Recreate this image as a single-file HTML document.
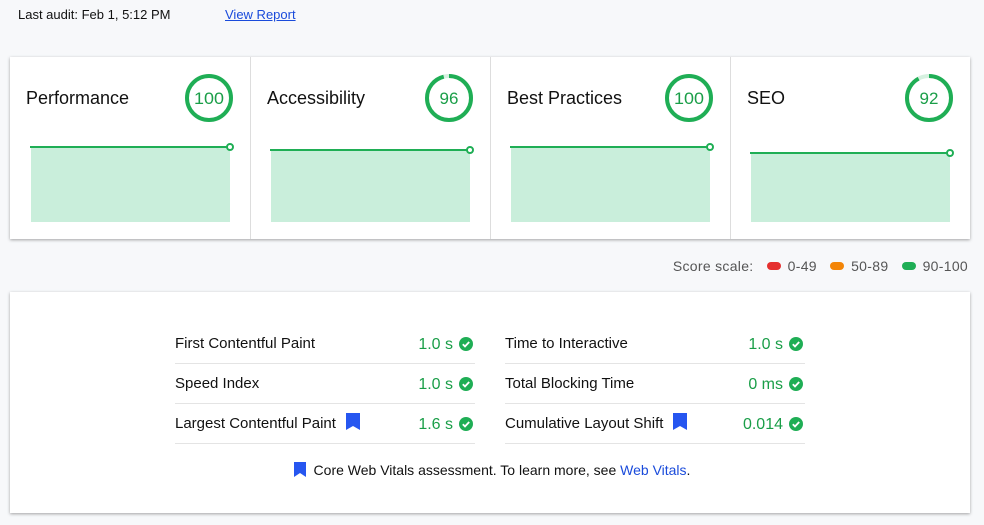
<!DOCTYPE html>
<html><head><style>
body{margin:0;background:#f7f8fa;font-family:"Liberation Sans",Arial,sans-serif;width:984px;height:525px;overflow:hidden;position:relative;color:#111}
.top{position:absolute;top:7px;left:18px;font-size:13px}
.top a{position:absolute;left:207px;top:0;color:#1a4bdb;white-space:nowrap}
.panel{position:absolute;left:10px;width:960px;background:#fff;box-shadow:0 1px 3px rgba(0,0,0,.35)}
.col{position:absolute;top:0;width:240px;height:182px;border-left:1px solid #ddd;box-sizing:border-box}
.col:first-child{border-left:none}
.col h2{position:absolute;left:16px;top:31px;margin:0;font-size:18px;font-weight:normal}
.col svg.g{position:absolute;left:174px;top:17px}
.col svg.c{position:absolute;left:0;top:0}
.scale{position:absolute;top:258px;right:16px;font-size:14px;color:#555;white-space:nowrap;letter-spacing:0.3px}
.scale i{display:inline-block;width:14px;height:8px;border-radius:4px;margin:0 7px 0 9px;vertical-align:1px}
.m{position:absolute;width:300px;height:40px;font-size:15px;border-bottom:1px solid #e4e4e4;box-sizing:border-box;line-height:40px}
.m .v{position:absolute;right:22px;top:1px;color:#1a9e48;font-size:16px}
.m .ck{position:absolute;right:2px;top:13px}
.bm{display:inline-block;vertical-align:-2px;margin-left:10px}
.foot{position:absolute;top:462px;left:0;width:984px;text-align:center;font-size:14px}
.foot a{color:#1a4bdb;text-decoration:none}
</style></head><body>
<div class="top">Last audit: Feb 1, 5:12 PM<a href="#">View Report</a></div>
<div class="panel" style="top:57px;height:182px">
 <div class="col" style="left:0">
  <h2>Performance</h2>
  <svg class="g" width="50" height="50"><circle cx="25" cy="24" r="22" fill="none" stroke="#1fae55" stroke-width="4"/><text x="25" y="30" font-size="17" fill="#1a9e48" text-anchor="middle" font-family="Liberation Sans" textLength="30" lengthAdjust="spacingAndGlyphs">100</text></svg>
  <svg class="c" width="240" height="182"><rect x="21" y="90" width="199" height="75" fill="#c9eedb"/><line x1="20" y1="90" x2="217" y2="90" stroke="#1fae55" stroke-width="2"/><circle cx="220" cy="90" r="3" fill="#fff" stroke="#1fae55" stroke-width="2"/></svg>
 </div>
 <div class="col" style="left:240px">
  <h2>Accessibility</h2>
  <svg class="g" width="50" height="50" style="left:173px"><circle cx="25" cy="24" r="22" fill="none" stroke="#d6f1e0" stroke-width="4"/><circle cx="25" cy="24" r="22" fill="none" stroke="#1fae55" stroke-width="4" stroke-dasharray="132.7 200" transform="rotate(-90 25 24)"/><text x="25" y="30" font-size="17" fill="#1a9e48" text-anchor="middle" font-family="Liberation Sans">96</text></svg>
  <svg class="c" width="240" height="182" style="left:-1px"><rect x="21" y="93" width="199" height="72" fill="#c9eedb"/><line x1="20" y1="93" x2="217" y2="93" stroke="#1fae55" stroke-width="2"/><circle cx="220" cy="93" r="3" fill="#fff" stroke="#1fae55" stroke-width="2"/></svg>
 </div>
 <div class="col" style="left:480px">
  <h2>Best Practices</h2>
  <svg class="g" width="50" height="50" style="left:173px"><circle cx="25" cy="24" r="22" fill="none" stroke="#1fae55" stroke-width="4"/><text x="25" y="30" font-size="17" fill="#1a9e48" text-anchor="middle" font-family="Liberation Sans" textLength="30" lengthAdjust="spacingAndGlyphs">100</text></svg>
  <svg class="c" width="240" height="182" style="left:-1px"><rect x="21" y="90" width="199" height="75" fill="#c9eedb"/><line x1="20" y1="90" x2="217" y2="90" stroke="#1fae55" stroke-width="2"/><circle cx="220" cy="90" r="3" fill="#fff" stroke="#1fae55" stroke-width="2"/></svg>
 </div>
 <div class="col" style="left:720px">
  <h2>SEO</h2>
  <svg class="g" width="50" height="50" style="left:173px"><circle cx="25" cy="24" r="22" fill="none" stroke="#d6f1e0" stroke-width="4"/><circle cx="25" cy="24" r="22" fill="none" stroke="#1fae55" stroke-width="4" stroke-dasharray="127.2 200" transform="rotate(-90 25 24)"/><text x="25" y="30" font-size="17" fill="#1a9e48" text-anchor="middle" font-family="Liberation Sans">92</text></svg>
  <svg class="c" width="240" height="182" style="left:-1px"><rect x="21" y="96" width="199" height="69" fill="#c9eedb"/><line x1="20" y1="96" x2="217" y2="96" stroke="#1fae55" stroke-width="2"/><circle cx="220" cy="96" r="3" fill="#fff" stroke="#1fae55" stroke-width="2"/></svg>
 </div>
</div>
<div class="scale">Score scale: <i style="background:#e5302f"></i>0-49 <i style="background:#f38507"></i>50-89 <i style="background:#1fae55"></i>90-100</div>
<div class="panel" style="top:292px;height:221px"></div>
<div class="m" style="left:175px;top:324px">First Contentful Paint<span class="v">1.0 s</span><svg class="ck" width="14" height="14"><circle cx="7" cy="7" r="7" fill="#1fae55"/><path d="M3.8 7.2l2.2 2.2 4.2-4.4" fill="none" stroke="#fff" stroke-width="1.8"/></svg></div>
<div class="m" style="left:175px;top:364px">Speed Index<span class="v">1.0 s</span><svg class="ck" width="14" height="14"><circle cx="7" cy="7" r="7" fill="#1fae55"/><path d="M3.8 7.2l2.2 2.2 4.2-4.4" fill="none" stroke="#fff" stroke-width="1.8"/></svg></div>
<div class="m" style="left:175px;top:404px">Largest Contentful Paint<svg class="bm" width="14" height="17"><path d="M0 0h14v17l-7-4-7 4z" fill="#2656f0"/></svg><span class="v">1.6 s</span><svg class="ck" width="14" height="14"><circle cx="7" cy="7" r="7" fill="#1fae55"/><path d="M3.8 7.2l2.2 2.2 4.2-4.4" fill="none" stroke="#fff" stroke-width="1.8"/></svg></div>
<div class="m" style="left:505px;top:324px">Time to Interactive<span class="v">1.0 s</span><svg class="ck" width="14" height="14"><circle cx="7" cy="7" r="7" fill="#1fae55"/><path d="M3.8 7.2l2.2 2.2 4.2-4.4" fill="none" stroke="#fff" stroke-width="1.8"/></svg></div>
<div class="m" style="left:505px;top:364px">Total Blocking Time<span class="v">0 ms</span><svg class="ck" width="14" height="14"><circle cx="7" cy="7" r="7" fill="#1fae55"/><path d="M3.8 7.2l2.2 2.2 4.2-4.4" fill="none" stroke="#fff" stroke-width="1.8"/></svg></div>
<div class="m" style="left:505px;top:404px">Cumulative Layout Shift<svg class="bm" width="14" height="17"><path d="M0 0h14v17l-7-4-7 4z" fill="#2656f0"/></svg><span class="v">0.014</span><svg class="ck" width="14" height="14"><circle cx="7" cy="7" r="7" fill="#1fae55"/><path d="M3.8 7.2l2.2 2.2 4.2-4.4" fill="none" stroke="#fff" stroke-width="1.8"/></svg></div>
<div class="foot"><svg width="12" height="15" style="vertical-align:-2px;margin-right:8px"><path d="M0 0h12v15l-6-4-6 4z" fill="#2656f0"/></svg>Core Web Vitals assessment. To learn more, see <a href="#">Web Vitals</a>.</div>
</body></html>
